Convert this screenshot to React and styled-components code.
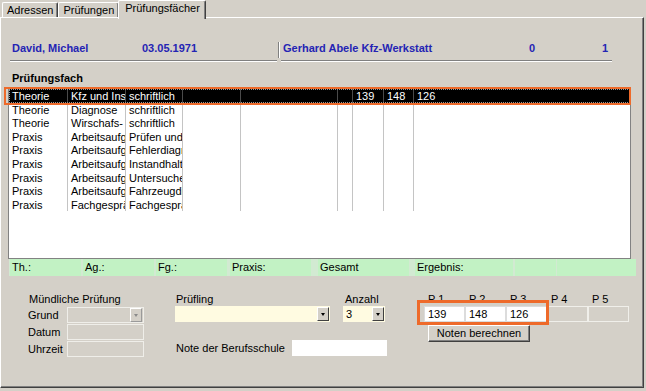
import React from "react";
import styled, { createGlobalStyle } from "styled-components";

const GlobalStyle = createGlobalStyle`
  html, body { margin: 0; padding: 0; background: #d4d0c8; }
  body {
    font-family: "Liberation Sans", Arial, sans-serif;
    font-size: 11px;
    color: #000;
  }
  * { box-sizing: border-box; }
`;

// Prüfungsfächer aus der Liste
const rows = [
  ["Theorie", "Kfz und Instandhaltung", "schriftlich", "", "", "", "139", "148", "126"],
  ["Theorie", "Diagnose", "schriftlich"],
  ["Theorie", "Wirschafs- und Sozialkunde", "schriftlich"],
  ["Praxis", "Arbeitsaufgabe 1", "Prüfen und Messen"],
  ["Praxis", "Arbeitsaufgabe 2", "Fehlerdiagnose"],
  ["Praxis", "Arbeitsaufgabe 3", "Instandhaltung"],
  ["Praxis", "Arbeitsaufgabe 4", "Untersuchen"],
  ["Praxis", "Arbeitsaufgabe 5", "Fahrzeugdiagnose"],
  ["Praxis", "Fachgespräch", "Fachgespräch"],
];
const colWidths = [59, 58, 57, 58, 97, 15, 31, 30];

const summary = [
  { label: "Th.:", w: 71, gap: 0 },
  { label: "Ag.:", w: 71, gap: 2 },
  { label: "Fg.:", w: 71, gap: 2 },
  { label: "Praxis:", w: 81, gap: 3 },
  { label: "Gesamt", w: 91, gap: 7 },
  { label: "Ergebnis:", w: 98, gap: 6 },
  { label: "", w: 41, gap: 2 },
  { label: "", w: 79, gap: 1 },
];

const points = [
  { label: "P 1", value: "139", on: true },
  { label: "P 2", value: "148", on: true },
  { label: "P 3", value: "126", on: true },
  { label: "P 4", value: "", on: false },
  { label: "P 5", value: "", on: false },
];

function App() {
  return (
    <>
      <GlobalStyle />
      <Window>
        <TabBar>
          <Tab>Adressen</Tab>
          <Tab>Prüfungen</Tab>
          <Tab $active>Prüfungsfächer</Tab>
        </TabBar>
        <Panel>
          <HeaderBar>
            <HeadGroup $w={267}>
              <HeadText $w={130}>David, Michael</HeadText>
              <HeadText>03.05.1971</HeadText>
            </HeadGroup>
            <HeadSep />
            <HeadGroup $w={331}>
              <HeadText $w={246}>Gerhard Abele Kfz-Werkstatt</HeadText>
              <HeadText $w={73}>0</HeadText>
              <HeadText>1</HeadText>
            </HeadGroup>
          </HeaderBar>

          <SectionLabel>Prüfungsfach</SectionLabel>
          <ListBox>
            {rows.map((r, i) => (
              <Row key={i} $selected={i === 0}>
                {colWidths.map((w, c) => (
                  <Cell key={c} $w={w} $selected={i === 0}>{r[c] || ""}</Cell>
                ))}
                <LastCell>{r[8] || ""}</LastCell>
              </Row>
            ))}
          </ListBox>

          <SummaryBar>
            {summary.map((s, i) => (
              <SummaryCell key={i} $w={s.w} $gap={s.gap}>{s.label}</SummaryCell>
            ))}
          </SummaryBar>

          <Bottom>
            <OralGroup>
              <Label $pl={1}>Mündliche Prüfung</Label>
              <FieldRow>
                <FieldLabel>Grund</FieldLabel>
                <Combo $w={77} $disabled>
                  <span />
                  <DropButton $disabled><Arrow $disabled /></DropButton>
                </Combo>
              </FieldRow>
              <FieldRow>
                <FieldLabel>Datum</FieldLabel>
                <Field $w={77} />
              </FieldRow>
              <FieldRow>
                <FieldLabel>Uhrzeit</FieldLabel>
                <Field $w={77} />
              </FieldRow>
            </OralGroup>

            <CandidateGroup>
              <TopRow>
                <Column>
                  <Label $pl={1}>Prüfling</Label>
                  <Combo $w={155}>
                    <span />
                    <DropButton><Arrow /></DropButton>
                  </Combo>
                </Column>
                <Column $ml={13}>
                  <Label $pl={2}>Anzahl</Label>
                  <Combo $w={42}>
                    <span>3</span>
                    <DropButton><Arrow /></DropButton>
                  </Combo>
                </Column>
              </TopRow>
              <NoteRow>
                <FieldLabel $w={116}>Note der Berufsschule</FieldLabel>
                <Field $w={95} $white />
              </NoteRow>
            </CandidateGroup>

            <PointsGroup>
              <PointsRow>
                {points.map((p) => (
                  <Column key={p.label}>
                    <Label $pl={4}>{p.label}</Label>
                    <PointBox $on={p.on}>{p.value}</PointBox>
                  </Column>
                ))}
              </PointsRow>
              <Button>Noten berechnen</Button>
            </PointsGroup>
          </Bottom>
        </Panel>

        <Highlight $l={4} $t={87} $w={627} $h={18} $b={2} />
        <Highlight $l={417} $t={300} $w={132} $h={25} $b={3} />
      </Window>
    </>
  );
}

export default App;

const Window = styled.div`
  position: relative;
  width: 646px;
  height: 391px;
  background: #d4d0c8;
  overflow: hidden;
`;

const TabBar = styled.div`
  display: flex;
  align-items: flex-end;
  height: 17px;
  padding-left: 2px;
`;

const Tab = styled.div`
  position: relative;
  z-index: ${(p) => (p.$active ? 2 : 1)};
  height: ${(p) => (p.$active ? "19px" : "15px")};
  margin-bottom: ${(p) => (p.$active ? "-2px" : "0")};
  margin-left: ${(p) => (p.$active ? "-1px" : "0")};
  padding: ${(p) => (p.$active ? "1px 5px 0 6px" : "1px 4px 0 4px")};
  line-height: 13px;
  background: #d4d0c8;
  border-top: 1px solid #fff;
  border-left: 1px solid #fff;
  border-right: 1px solid #404040;
  box-shadow: inset -1px 0 0 #808080;
  border-radius: 2px 2px 0 0;
  white-space: nowrap;
`;

const Panel = styled.div`
  width: 644px;
  height: 371px;
  border-top: 1px solid #fff;
  border-left: 1px solid #fff;
  border-right: 1px solid #404040;
  border-bottom: 1px solid #404040;
  box-shadow: inset -1px -1px 0 #808080;
`;

const HeaderBar = styled.div`
  display: flex;
  margin-top: 22px;
  margin-left: 9px;
`;

const HeadGroup = styled.div`
  display: flex;
  width: ${(p) => p.$w}px;
  height: 21px;
  padding: 2px 0 0 2px;
  border-bottom: 1px solid #808080;
  box-shadow: 0 1px 0 #fff;
`;

const HeadText = styled.div`
  width: ${(p) => (p.$w ? `${p.$w}px` : "auto")};
  flex: none;
  font-weight: bold;
  color: #2424b4;
  line-height: 13px;
  white-space: nowrap;
`;

const HeadSep = styled.div`
  width: 2px;
  height: 16px;
  margin: 2px 1px 0 1px;
  border-left: 1px solid #808080;
  border-right: 1px solid #fff;
`;

const SectionLabel = styled.div`
  margin: 11px 0 0 11px;
  font-weight: bold;
  line-height: 13px;
`;

const ListBox = styled.div`
  margin: 3px 0 0 7px;
  width: 623px;
  height: 171px;
  background: #fff;
  border: 1px solid #828282;
`;

const Row = styled.div`
  display: flex;
  height: 13.6px;
  padding-top: 1px;
  line-height: 13px;
  background: ${(p) => (p.$selected ? "#000" : "#fff")};
  color: ${(p) => (p.$selected ? "#fff" : "#000")};
  outline: ${(p) => (p.$selected ? "1px dotted #9a9a9a" : "none")};
  outline-offset: -1px;
`;

const Cell = styled.div`
  flex: none;
  width: ${(p) => p.$w}px;
  margin-top: -1px;
  padding: 1px 0 0 3px;
  overflow: hidden;
  white-space: nowrap;
  border-right: 1px solid ${(p) => (p.$selected ? "#4a4a4a" : "#c4c4c4")};
`;

const LastCell = styled.div`
  flex: 1;
  padding-left: 3px;
  white-space: nowrap;
`;

const SummaryBar = styled.div`
  display: flex;
  margin-left: 8px;
  width: 622px;
  height: 17px;
  padding-left: 1px;
  background: #d2ead2;
`;

const SummaryCell = styled.div`
  flex: none;
  width: ${(p) => p.$w}px;
  margin-left: ${(p) => p.$gap}px;
  padding-left: 2px;
  line-height: 17px;
  background: #c2f2c4;
`;

const Bottom = styled.div`
  display: flex;
  align-items: flex-start;
  margin-top: 16px;
  padding-left: 27px;
`;

const OralGroup = styled.div`
  width: 116px;
  display: flex;
  flex-direction: column;
  gap: 1px;
`;

const Label = styled.div`
  height: 14px;
  line-height: 14px;
  padding-left: ${(p) => p.$pl || 0}px;
  white-space: nowrap;
`;

const FieldRow = styled.div`
  display: flex;
  align-items: center;
  height: 16px;
`;

const FieldLabel = styled.div`
  width: ${(p) => p.$w || 39}px;
  flex: none;
  white-space: nowrap;
`;

const Field = styled.div`
  width: ${(p) => p.$w}px;
  height: 16px;
  background: ${(p) => (p.$white ? "#fff" : "#d4d0c8")};
  border: ${(p) => (p.$white ? "none" : "1px solid #efeee9")};
`;

const Combo = styled.div`
  display: flex;
  align-items: center;
  justify-content: space-between;
  width: ${(p) => p.$w}px;
  height: 16px;
  padding: 0 1px 0 3px;
  background: ${(p) => (p.$disabled ? "#d4d0c8" : "#fffbe1")};
  border: ${(p) => (p.$disabled ? "1px solid #efeee9" : "none")};
  line-height: 14px;
`;

const DropButton = styled.div`
  display: flex;
  align-items: center;
  justify-content: center;
  width: 12px;
  height: 14px;
  background: #d4d0c8;
  border-top: 1px solid #fff;
  border-left: 1px solid #fff;
  border-right: 1px solid ${(p) => (p.$disabled ? "#9a9a9a" : "#404040")};
  border-bottom: 1px solid ${(p) => (p.$disabled ? "#9a9a9a" : "#404040")};
`;

const Arrow = styled.div`
  width: 0;
  height: 0;
  border-left: 2.5px solid transparent;
  border-right: 2.5px solid transparent;
  border-top: 3px solid ${(p) => (p.$disabled ? "#8a8a8a" : "#000")};
`;

const CandidateGroup = styled.div`
  margin-left: 31px;
  display: flex;
  flex-direction: column;
`;

const TopRow = styled.div`
  display: flex;
`;

const Column = styled.div`
  display: flex;
  flex-direction: column;
  margin-left: ${(p) => p.$ml || 0}px;
`;

const NoteRow = styled.div`
  display: flex;
  align-items: center;
  margin-top: 18px;
  padding-left: 1px;
`;

const PointsGroup = styled.div`
  margin-left: 37px;
  display: flex;
  flex-direction: column;
`;

const PointsRow = styled.div`
  display: flex;
`;

const PointBox = styled.div`
  width: 41px;
  height: 16px;
  padding-left: 3px;
  line-height: 15px;
  background: ${(p) => (p.$on ? "#fff" : "#d4d0c8")};
  border: 1px solid ${(p) => (p.$on ? "#dcdcdc" : "#f0efea")};
`;

const Button = styled.div`
  margin: 3px 0 0 4px;
  width: 102px;
  height: 17px;
  line-height: 14px;
  text-align: center;
  background: #d4d0c8;
  border-top: 1px solid #fff;
  border-left: 1px solid #fff;
  border-right: 1px solid #404040;
  border-bottom: 1px solid #404040;
  box-shadow: inset -1px -1px 0 #808080;
`;

const Highlight = styled.div`
  position: absolute;
  left: ${(p) => p.$l}px;
  top: ${(p) => p.$t}px;
  width: ${(p) => p.$w}px;
  height: ${(p) => p.$h}px;
  border: ${(p) => p.$b}px solid #ee6a2a;
  pointer-events: none;
`;
